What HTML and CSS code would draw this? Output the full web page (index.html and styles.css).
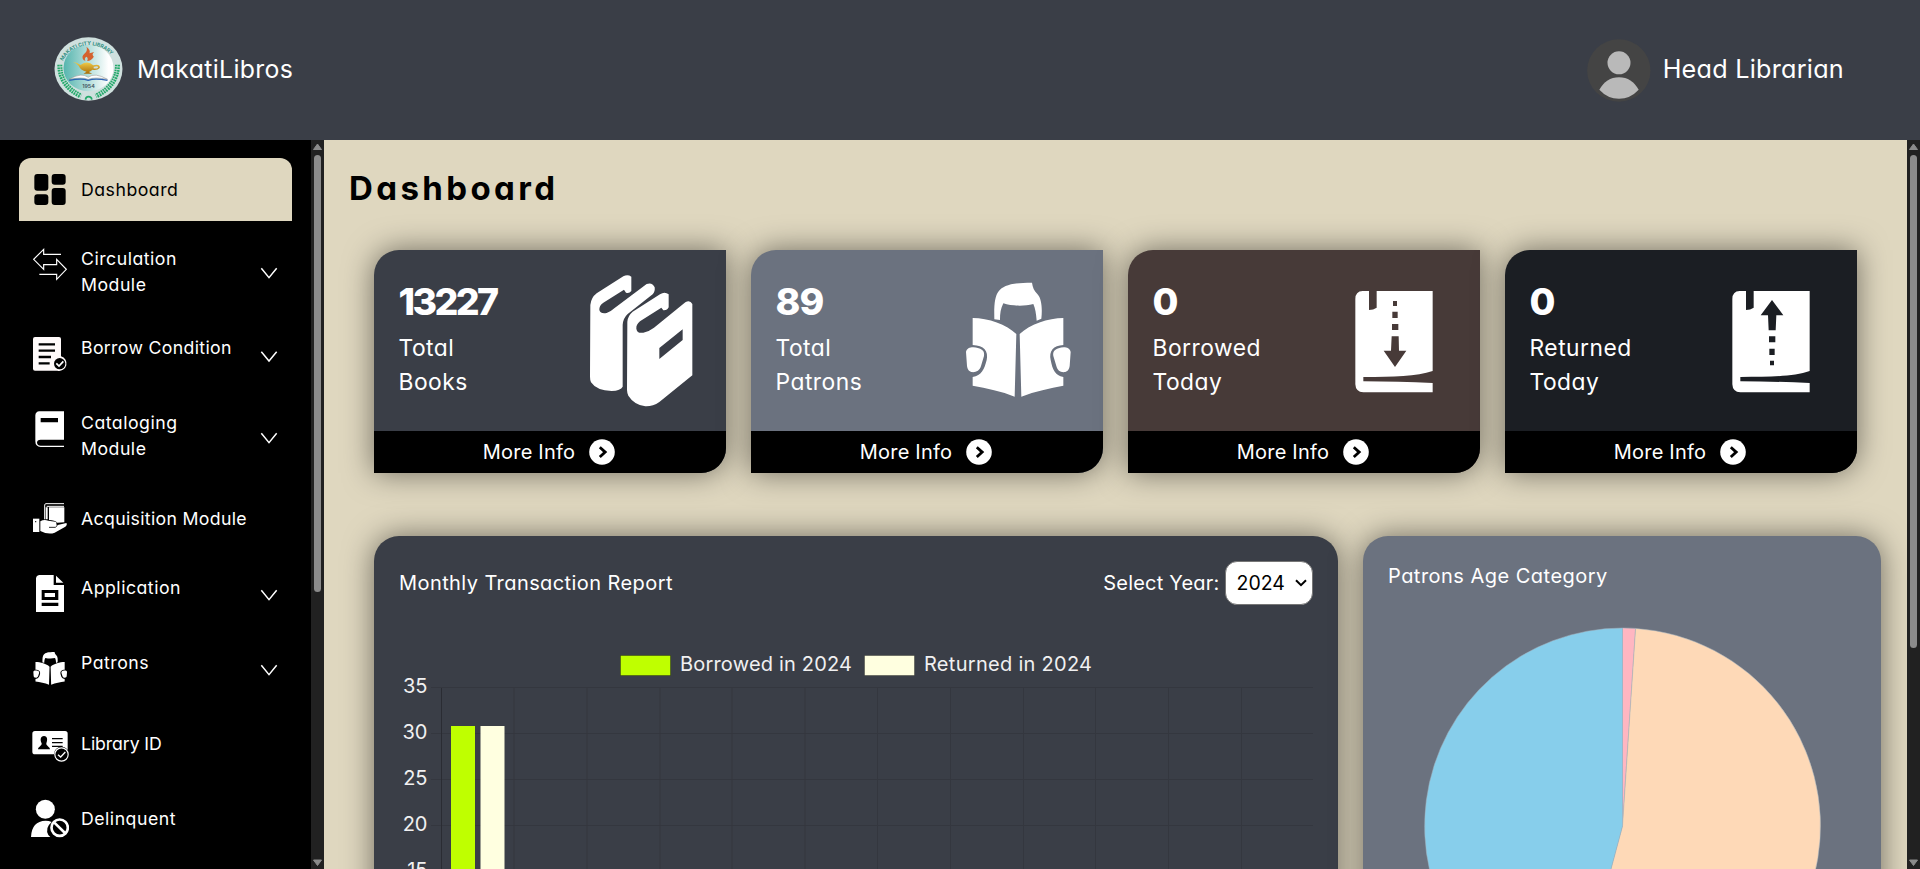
FILE: index.html
```html
<!DOCTYPE html>
<html lang="en">
<head>
<meta charset="utf-8">
<title>MakatiLibros</title>
<link rel="stylesheet" href="styles.css">
</head>
<body>
<svg class="defs" aria-hidden="true">
  <defs>
    <g id="reader">
      <path d="M763 268 C762 225 764 200 776 184 C790 166 815 158 876 158 C878 172 882 182 892 192 C906 206 907 240 904 266 L890 272 C888 250 886 235 880 222 C850 230 815 228 790 220 C782 236 780 250 780 270 Z"/>
      <path d="M698 264 C745 264 800 284 829 312 L824 500 C785 484 740 474 698 467 V441 C725 436 732 420 740 390 C746 364 732 346 698 345 Z"/>
      <path d="M970 264 C925 264 868 284 839 312 L844 500 C885 484 930 474 970 467 V441 C945 436 938 420 932 390 C926 364 940 346 970 345 Z"/>
      <path d="M678 366 C681 351 700 349 716 355 C729 359 734 366 732 378 L723 408 C719 423 706 428 694 426 C685 423 683 418 681 408 Z"/>
      <path d="M992 366 C989 351 970 349 956 355 C943 359 938 366 940 378 L949 408 C953 423 962 428 976 426 C985 423 987 418 989 408 Z"/>
    </g>
    <path id="book" fill-rule="evenodd" d="M777 183 H758 Q736 184 736 207 V463 Q737 486 760 487 H968 V459 C900 455 830 455 760 454 V441 C850 440 920 440 968 423 V183 H800 V233 Q790 240 777 240 Z"/>
    <g id="more"><circle cx="13" cy="13" r="12.8" fill="#fff"/><path d="M10.8 8.2 L16.2 13.1 L10.8 18" fill="none" stroke="#000" stroke-width="2.8"/></g>
    <path id="chev" d="M784 -14 L807 14 L830 -14" fill="none" stroke="#fff" stroke-width="4.5"/>
  </defs>
</svg>

<header class="topbar">
  <div class="brand">
    <svg class="logo" viewBox="162 109 206 192">
      <defs>
        <linearGradient id="seal"><stop offset="0" stop-color="#56b5ae"/><stop offset=".9" stop-color="#fff"/></linearGradient>
        <linearGradient id="gold" x2="0" y2="1"><stop offset="0" stop-color="#f4d14c"/><stop offset="1" stop-color="#a96d08"/></linearGradient>
        <path id="ring" d="M188 181 A89 89 0 0 1 347 184"/>
      </defs>
      <ellipse cx="265" cy="205" rx="102" ry="95" fill="#cfe0de"/>
      <ellipse cx="265" cy="202" rx="75" ry="70" fill="url(#seal)"/>
      <text class="seal-ring"><textPath href="#ring">MAKATI CITY LIBRARY</textPath></text>
      <g fill="none" stroke="#22a869" stroke-width="15" stroke-dasharray="5 2.5"><path d="M179 192 Q178 255 243 286"/><path d="M352 192 Q352 255 287 286"/></g>
      <g fill="none" stroke="#cfe0de" stroke-width="1.5"><path d="M179 192 Q178 255 243 286"/><path d="M352 192 Q352 255 287 286"/></g>
      <path d="M256 297 Q257 288 265 288 Q274 288 275 297" fill="none" stroke="#22a869" stroke-width="5"/>
      <path d="M250 178 Q242 168 254 158 Q263 150 259 138 Q272 148 268 158 L282 154 Q273 162 281 168 Q271 182 261 181 Q265 172 259 168 Q251 172 256 181 Z" fill="#d4622f"/>
      <path d="M218 183 Q232 186 241 193 Q263 178 279 194 Q300 189 299 202 Q291 210 277 207 Q270 213 266 214 L276 219 H250 L259 213 Q240 208 236 196 Q229 187 218 183 Z" fill="url(#gold)"/>
      <path d="M281 198 Q294 194 294 201 Q288 205 280 203 Z" fill="#cfe0de"/>
      <path d="M207 236 Q245 214 264 230 Q284 214 322 236 Q284 228 264 236 Q244 228 207 236 Z" fill="#fff" stroke="#888" stroke-width="1.5"/>
      <path d="M207 239 Q245 232 264 239 Q284 232 322 239" fill="none" stroke="#2d63b4" stroke-width="4"/>
      <text class="seal-year" x="265" y="262" text-anchor="middle">1954</text>
    </svg>
    <span class="brand-name">MakatiLibros</span>
  </div>
  <div class="user">
    <svg class="avatar" viewBox="80 56 192 188">
      <ellipse cx="175.500" cy="150" rx="95" ry="93.500" fill="#444"/>
      <circle cx="176" cy="127" r="34.500" fill="#b9b9b9"/>
      <path d="M117 208 Q137 170 176 170 Q215 170 235 208 Q210 235 176 235 Q142 235 117 208 Z" fill="#b9b9b9"/>
    </svg>
    <span class="user-name">Head Librarian</span>
  </div>
</header>

<div class="layout">
  <nav class="sidebar">
    <a class="item active">
      <svg class="icon" viewBox="93 474 114 189"><g fill="#000"><rect x="103" y="522" width="42" height="50" rx="9"/><rect x="155" y="522" width="42" height="32" rx="9"/><rect x="103" y="583" width="42" height="32" rx="9"/><rect x="155" y="564" width="42" height="51" rx="9"/></g></svg>
      <span class="label">Dashboard</span>
    </a>
    <a class="item circulation">
      <svg class="icon" viewBox="93 36 114 180"><path d="M183 73 H131 V58 L101 88 L131 118 V104 H170 V88 L199 118 L170 148 V133 H118" fill="none" stroke="#fff" stroke-width="3.500"/></svg>
      <span class="label">Circulation<br>Module</span>
      <svg class="chevron" viewBox="780 -93 54 180"><use href="#chev"/></svg>
    </a>
    <a class="item borrow">
      <svg class="icon" viewBox="93 264 114 180"><path d="M105 321 H177 Q183 321 183 327 V379 A22 22 0 1 1 172 422 H105 Q99 422 99 416 V327 Q99 321 105 321 Z" fill="#fffafa"/><path d="M116 343 H165 M116 362 H165 M116 381 H153 M116 400 H149" stroke="#000" stroke-width="7"/><circle cx="179" cy="401" r="17" fill="#000"/><path d="M169 400 L177 408 L190 394" fill="none" stroke="#fff" stroke-width="5"/></svg>
      <span class="label">Borrow Condition</span>
      <svg class="chevron" viewBox="780 -115 54 180"><use href="#chev"/></svg>
    </a>
    <a class="item catalog">
      <svg class="icon" viewBox="93 528 114 180"><path fill-rule="evenodd" d="M118 544 H192 V629 H122 Q111 629 111 638 Q112 647 122 647 H192 V651 H122 Q106 650 106 634 V556 Q107 545 118 544 Z M122 564 H174 V577 H122 Z" fill="#fff"/></svg>
      <span class="label">Cataloging<br>Module</span>
      <svg class="chevron" viewBox="780 -96 54 180"><use href="#chev"/></svg>
    </a>
    <a class="item acquisition">
      <svg class="icon" viewBox="93 777 114 180"><path d="M192 821 H138 Q133 821 134 828 V868 M192 829 H140" fill="none" stroke="#fff" stroke-width="3"/><path d="M147 832 H193 V877 L172 878 Q165 870 147 870 Z M137 832 H143 V868 H137 Z" fill="#fff"/><rect x="99" y="866" width="19" height="40" fill="#fff"/><circle cx="107" cy="875" r="2"/><path d="M121 874 Q132 867 145 872 L166 875 Q174 880 170 886 L199 879 Q203 884 196 890 L164 908 Q145 915 121 903 Z" fill="#fff"/><path d="M147 892 H166 Q175 888 170 879" fill="none" stroke="#000" stroke-width="2.500"/></svg>
      <span class="label">Acquisition Module</span>
    </a>
    <a class="item application">
      <svg class="icon" viewBox="93 24 114 180"><path fill-rule="evenodd" d="M117 75 H161 V105 H192 V186 H108 V84 Q109 76 117 75 Z M125 120 H175 V150 H125 Z M125 158 H175 V168 H125 Z" fill="#fff"/><path d="M168 77 L190 98 H168 Z M134 129 H165 V141 H134 Z" fill="#fff"/></svg>
      <span class="label">Application</span>
      <svg class="chevron" viewBox="780 -111 54 180"><use href="#chev"/></svg>
    </a>
    <a class="item patrons">
      <svg class="icon" viewBox="93 249 114 180"><use href="#reader" fill="#fff" transform="translate(100 306) scale(.322 .2865) translate(-678 -158)"/></svg>
      <span class="label">Patrons</span>
      <svg class="chevron" viewBox="780 -111 54 180"><use href="#chev"/></svg>
    </a>
    <a class="item library-id">
      <svg class="icon" viewBox="93 492 114 180"><rect x="97" y="543" width="106" height="70" rx="8" fill="#fff"/><path d="M132 558 C143 558 143 570 139 580 C138 588 149 590 150 598 H114 C115 590 126 588 125 580 C120 570 121 558 132 558 Z"/><path d="M156 566 H188 M156 578 H188 M156 589 H188" stroke="#000" stroke-width="3.500"/><circle cx="184.500" cy="613.500" r="23"/><circle cx="184.500" cy="613.500" r="20" fill="none" stroke="#fff" stroke-width="3.500"/><path d="M174 614 L182 621 L196 606" fill="none" stroke="#fff" stroke-width="4"/></svg>
      <span class="label">Library ID</span>
    </a>
    <a class="item delinquent">
      <svg class="icon" viewBox="93 717 114 180"><circle cx="136" cy="778" r="28.500" fill="#fff"/><path d="M93 861 Q95 813 137 812 Q147 812 155 816 Q134 834 145 855 L151 861 Z" fill="#fff"/><circle cx="179" cy="833" r="24.500" fill="none" stroke="#fff" stroke-width="8"/><path d="M163 818 L195 849" stroke="#fff" stroke-width="8"/></svg>
      <span class="label">Delinquent</span>
    </a>
  </nav>
  <div class="scrollbar">
    <svg class="arrow" viewBox="0 0 13 15"><path d="M6.500 4 L10.500 9.500 H2.500 Z"/></svg>
    <div class="thumb thumb-side"></div>
    <svg class="arrow bottom" viewBox="0 0 13 15"><path d="M2.500 6 H10.500 L6.500 11.500 Z"/></svg>
  </div>

  <main class="content">
    <h1 class="title">Dashboard</h1>
    <section class="cards">
      <article class="card slate">
        <div class="card-body">
          <div><div class="count long">13227</div><div class="caption">Total<br>Books</div></div>
          <svg class="art" viewBox="732 300 456 543"><g fill="#fff">
            <path fill-rule="evenodd" d="M781 465 Q783 443 800 430 L880 379 Q893 372 904 380 V423 Q897 432 888 428 L882 419 L820 458 Q807 467 808 480 Q812 493 830 489 Q842 485 850 477 L950 402 Q967 396 974 412 Q976 424 968 433 L893 492 Q879 505 878 525 V710 Q872 722 845 723 Q800 722 783 697 Q780 690 780 680 Z"/>
            <path fill-rule="evenodd" d="M892 515 Q893 498 908 485 L990 433 Q1004 424 1016 433 V472 Q1012 482 1000 481 L994 473 L930 514 Q918 524 919 536 Q921 551 940 548 Q956 545 972 533 L1066 457 Q1080 449 1087 462 V676 L988 756 Q968 770 946 769 Q912 764 895 737 Q891 727 891 720 Z M988 594 V627 L1058 570 V538 Z"/>
          </g></svg>
        </div>
        <a class="more">More Info<svg class="go" viewBox="0 0 26 26"><use href="#more"/></svg></a>
      </article>
      <article class="card grey">
        <div class="card-body">
          <div><div class="count">89</div><div class="caption">Total<br>Patrons</div></div>
          <svg class="art" viewBox="633 60 456 543"><use href="#reader" fill="#fff"/></svg>
        </div>
        <a class="more">More Info<svg class="go" viewBox="0 0 26 26"><use href="#more"/></svg></a>
      </article>
      <article class="card brown">
        <div class="card-body">
          <div><div class="count">0</div><div class="caption">Borrowed<br>Today</div></div>
          <svg class="art" viewBox="654 60 456 543"><use href="#book" fill="#fff"/><path class="cut" d="M849 213 H861 V228 H849 Z M847 245 H863 V264 H847 Z M846 282 H865 V300 H846 Z M845 319 H866 L867 362 H889 L855 411 L821 362 H843 Z"/></svg>
        </div>
        <a class="more">More Info<svg class="go" viewBox="0 0 26 26"><use href="#more"/></svg></a>
      </article>
      <article class="card dark">
        <div class="card-body">
          <div><div class="count">0</div><div class="caption">Returned<br>Today</div></div>
          <svg class="art" viewBox="654 60 456 543"><use href="#book" fill="#fff"/><path class="cut" d="M849 392 H861 V406 H849 Z M847 356 H863 V375 H847 Z M846 319 H865 V337 H846 Z M845 301 H866 L868 256 H889 L855 210 L821 256 H843 Z"/></svg>
        </div>
        <a class="more">More Info<svg class="go" viewBox="0 0 26 26"><use href="#more"/></svg></a>
      </article>
    </section>

    <section class="panels">
      <article class="panel report">
        <div class="panel-head">
          <span class="panel-title">Monthly Transaction Report</span>
          <span class="picker"><span class="picker-label">Select Year:</span><span class="select">2024<svg class="caret" viewBox="0 0 12 8"><path d="M1 1.200 L6 6.200 L11 1.200"/></svg></span></span>
        </div>
        <svg class="chart" viewBox="399 605 914 331">
          <path class="grid" d="M431 687.500 H1313 M431 733.500 H1313 M431 779.500 H1313 M431 825.500 H1313 M431 871.500 H1313 M514 688 V900 M587 688 V900 M660 688 V900 M732 688 V900 M805 688 V900 M877.500 688 V900 M950.500 688 V900 M1023.500 688 V900 M1095.500 688 V900 M1168.500 688 V900 M1241.500 688 V900"/>
          <path class="axis" d="M441.500 688 V900"/>
          <rect x="451" y="726" width="24" height="200" fill="#bfff00"/>
          <rect x="480.500" y="726" width="24" height="200" fill="#ffffe0"/>
          <rect class="swatch" x="620.500" y="655.500" width="50" height="20" fill="#bfff00"/>
          <text x="680" y="671" textLength="172">Borrowed in 2024</text>
          <rect class="swatch" x="864.500" y="655.500" width="50" height="20" fill="#ffffe0"/>
          <text x="924" y="671" textLength="168">Returned in 2024</text>
          <g class="ticks"><text x="427.500" y="693">35</text><text x="427.500" y="739">30</text><text x="427.500" y="785">25</text><text x="427.500" y="831">20</text><text x="427.500" y="877">15</text></g>
        </svg>
      </article>
      <article class="panel ages">
        <div class="ages-title">Patrons Age Category</div>
        <svg class="pie" viewBox="1388 590 468 440">
          <g stroke="#a3b4c0" stroke-opacity=".5" stroke-width="1">
          <path fill="#ffb6c1" d="M1622.500 826 V628 A198 198 0 0 1 1635.600 628.400 Z"/>
          <path fill="#fed9b7" d="M1622.500 826 L1635.600 628.400 A198 198 0 1 1 1571.200 1017.200 Z"/>
          <path fill="#87ceeb" d="M1622.500 826 L1571.200 1017.200 A198 198 0 0 1 1622.500 628 Z"/>
          </g>
        </svg>
      </article>
    </section>
  </main>
  <div class="scrollbar">
    <svg class="arrow" viewBox="0 0 13 15"><path d="M6.500 4 L10.500 9.500 H2.500 Z"/></svg>
    <div class="thumb thumb-main"></div>
    <svg class="arrow bottom" viewBox="0 0 13 15"><path d="M2.500 6 H10.500 L6.500 11.500 Z"/></svg>
  </div>
</div>
</body>
</html>
```
FILE: styles.css
```css
* { box-sizing: border-box; }
body {
  margin: 0;
  height: 869px;
  display: flex;
  flex-direction: column;
  overflow: hidden;
  background: #dfd7bf;
  color: #fff;
  font-family: Inter, "Open Sans", sans-serif;
  font-feature-settings: "cv11";
}
svg { display: block; flex: none; }
.defs { position: absolute; width: 0; height: 0; }

.topbar {
  height: 140px;
  flex: none;
  display: flex;
  justify-content: space-between;
  align-items: center;
  padding: 0 76px 3px 54px;
  background: #3a3e47;
}
.brand, .user { display: flex; align-items: center; }
.brand { gap: 14px; }
.user { gap: 12px; padding-top: 3px; }
.logo { width: 69px; height: 64px; }
.avatar { width: 64px; height: 63px; }
.brand-name { margin-top: 1px; font-size: 24.8px; letter-spacing: .35px; }
.user-name { margin-bottom: 2px; font-size: 25.2px; letter-spacing: .25px; }
.seal-ring { font-size: 15.3px; font-weight: 700; fill: #2f8f83; }
.seal-year { font-size: 16px; font-weight: 600; fill: #3d5560; }

.layout { flex: 1; min-height: 0; display: flex; }
.sidebar { width: 311px; flex: none; padding: 18px 19px 0; background: #000; overflow: hidden; }
.item { display: flex; align-items: center; height: 60px; padding: 0 14px 0 12px; gap: 12px; }
.item.active { height: 63px; background: #dfd7bf; color: #000; border-radius: 12px 12px 0 0; }
.icon { width: 38px; height: 100%; }
.label { flex: 1; font-size: 17.7px; line-height: 26px; letter-spacing: .5px; white-space: nowrap; }
.borrow .label, .acquisition .label { letter-spacing: .33px; }
.library-id .label { letter-spacing: -.1px; }
.chevron { width: 18px; height: 60px; }
.circulation, .library-id { margin-top: 21px; }
.borrow { margin-top: 16px; }
.catalog { margin-top: 28px; }
.acquisition { margin-top: 23px; }
.application { margin-top: 9px; }
.patrons, .delinquent { margin-top: 15px; }

.scrollbar { width: 13px; flex: none; display: flex; flex-direction: column; background: #212121; }
.arrow { width: 13px; height: 15px; fill: #8b8b8b; stroke: #8b8b8b; stroke-linejoin: round; }
.arrow.bottom { margin-top: auto; }
.thumb { width: 7px; margin-left: 3px; border-radius: 4px; background: #8b8b8b; }
.thumb-side { height: 437px; }
.thumb-main { height: 493px; }

.content { flex: 1; min-width: 0; padding: 28px 26px 0 25px; overflow: hidden; background: #dfd7bf; }
.title { margin: 0; color: #000; font-size: 33px; line-height: 40px; font-weight: 700; letter-spacing: 3.4px; }
.cards, .panels { display: flex; gap: 25px; padding-left: 25px; }
.cards { margin-top: 42px; }
.card { width: 352px; height: 223px; flex: none; display: flex; flex-direction: column; border-radius: 25px 0; overflow: hidden; box-shadow: 0 0 30px rgba(0, 0, 0, .5); }
.card-body { height: 181px; display: flex; justify-content: space-between; padding-left: 24.5px; }
.slate, .report { background: #3a3e47; }
.grey, .ages { background: #6b727f; }
.brown { background: #473a38; }
.dark { background: #1b1e23; }
.brown .cut { fill: #473a38; }
.dark .cut { fill: #1b1e23; }
.count { padding-top: 30px; font-size: 37.5px; line-height: 44px; font-weight: 800; letter-spacing: -1px; }
.count.long { letter-spacing: -2.6px; }
.caption { margin-top: 7px; font-size: 22.8px; line-height: 34px; letter-spacing: .5px; }
.art { width: 152px; height: 181px; }
.more { flex: 1; display: flex; align-items: center; justify-content: center; gap: 14px; padding-right: 2px; background: #000; font-size: 20px; letter-spacing: .2px; }
.go { width: 26px; height: 26px; }

.panels { margin-top: 63px; }
.panel { flex: none; height: 520px; padding: 25px; border-radius: 25px; box-shadow: 0 0 30px rgba(0, 0, 0, .5); font-size: 20px; }
.report { width: 964px; }
.ages { width: 518px; }
.panel-head { height: 44px; display: flex; align-items: center; justify-content: space-between; }
.panel-title { letter-spacing: .42px; }
.picker { display: flex; align-items: center; gap: 5px; }
.picker-label { letter-spacing: .2px; }
.select { width: 88.5px; height: 44px; display: flex; align-items: center; justify-content: space-between; padding: 0 5px 0 11px; border: 1px solid #767676; border-radius: 12px; background: #fff; color: #000; font-size: 19.5px; }
.caret { width: 12px; height: 8px; fill: none; stroke: #000; stroke-width: 2; }
.ages-title { height: 29px; line-height: 31px; letter-spacing: .48px; }
.chart { width: 914px; height: 331px; font-size: 20px; fill: #f0f0f1; }
.grid { fill: none; stroke: #34373f; }
.axis { fill: none; stroke: #2a2c33; }
.swatch { stroke: rgba(0, 0, 0, .3); }
.ticks { text-anchor: end; }
.pie { width: 468px; height: 440px; }
```
